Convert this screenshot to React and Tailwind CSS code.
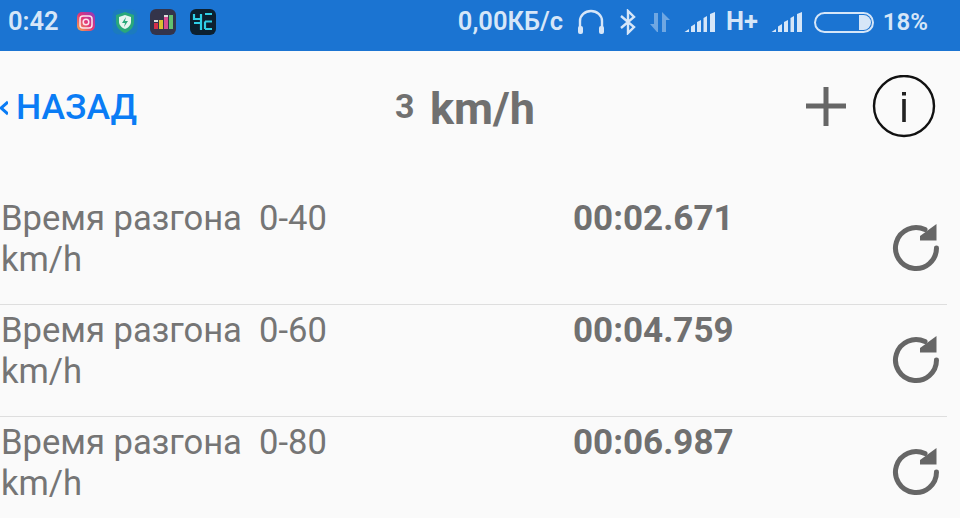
import React from 'react'

const font = { fontFamily: 'Roboto, sans-serif' }

const Signal = () => (
    <svg width="32" height="22" viewBox="0 0 32 22">
        <path d="M0.5 21 L5 18 V21 Z M7 21 V15.5 L11 13 V21 Z M13 21 V11 L17 9 V21 Z M19.5 21 V7 L23 5 V21 Z M26 21 V3 L31 1 V21 Z" fill="#d6e6f8" />
    </svg>
)

const Reload = () => (
    <svg width="48" height="48" viewBox="0 0 48 48" fill="none">
        <path d="M44.5 24 A20.5 20.5 0 1 1 33 5.6" stroke="#666" strokeWidth="5" strokeLinecap="round" />
        <path d="M44.5 0 V16.5 H28 V12 Z" fill="#666" />
    </svg>
)

const StatusBar = () => (
    <div className="h-[51px] bg-[#1b74d2] flex items-center justify-between pl-[8px] pr-[32px] pb-[7px] text-[#d6e6f8] font-semibold text-[25.5px] shrink-0">
        <div className="flex items-center">
            <span className="w-[68px] leading-none">0:42</span>
            <svg width="20" height="20" viewBox="0 0 20 20">
                <defs>
                    <linearGradient id="ig" x1="0" y1="1" x2="1" y2="0">
                        <stop offset="0" stopColor="#f5b04a" />
                        <stop offset="0.5" stopColor="#e0357a" />
                        <stop offset="1" stopColor="#8a3ac0" />
                    </linearGradient>
                </defs>
                <rect width="18" height="19" x="1" rx="5" fill="url(#ig)" />
                <rect x="4" y="4" width="12" height="12" rx="3" fill="none" stroke="#fbe6ee" strokeWidth="1.5" />
                <circle cx="10" cy="10" r="2.8" fill="none" stroke="#fbe6ee" strokeWidth="1.5" />
            </svg>
            <svg width="26" height="26" viewBox="0 0 26 26" className="ml-[16px]">
                <rect x="0.5" y="0.5" width="25" height="25" rx="6" fill="#1f8a9a" fillOpacity="0.35" />
                <path d="M13 3 L22 6 V13 C22 18 18 22 13 24 C8 22 4 18 4 13 V6 Z" fill="#2aa87a" />
                <path d="M13 6 L19 8 V13 C19 16 16 19 13 20 C10 19 7 16 7 13 V8 Z" fill="#e8f5f0" />
                <path d="M14 8 L10 14 H13 L12 18 L16 12 H13 Z" fill="#2aa87a" />
            </svg>
            <svg width="26" height="26" viewBox="0 0 26 26" className="ml-[12px]">
                <rect width="26" height="26" rx="6" fill="#34344a" />
                <rect x="4" y="14" width="4" height="6" fill="#d8304a" />
                <rect x="9" y="11" width="4" height="9" fill="#d8c030" />
                <rect x="14" y="8" width="4" height="12" fill="#d84a90" />
                <rect x="19" y="6" width="4" height="14" fill="#60c070" />
                <rect x="14" y="6" width="4" height="2" fill="#dddddd" />
                <rect x="4" y="11" width="4" height="2" fill="#dddddd" />
            </svg>
            <svg width="26" height="26" viewBox="0 0 26 26" className="ml-[14px]">
                <rect width="26" height="26" rx="6" fill="#0c2030" />
                <path d="M11 5 V14 H4 M4 5 V10 H11 M11 14 V21 M15 5 H22 M15 12.5 H22 M15 20 H22 M15 12.5 V20" stroke="#2ed0e8" strokeWidth="2.2" fill="none" />
            </svg>
        </div>
        <div className="flex items-center">
            <span className="leading-none">0,00КБ/с</span>
            <svg width="28" height="26" viewBox="0 0 28 26" className="ml-[14px]" fill="none">
                <path d="M3 21 V12 A11 10 0 0 1 25 12 V21" stroke="#d6e6f8" strokeWidth="2.4" />
                <rect x="1" y="17" width="5" height="8" rx="2" fill="#d6e6f8" />
                <rect x="22" y="17" width="5" height="8" rx="2" fill="#d6e6f8" />
            </svg>
            <svg width="18" height="26" viewBox="0 0 18 26" className="ml-[14px]" fill="none">
                <path d="M2 7 L15 18 L9 24 V2 L15 8 L2 19" stroke="#d6e6f8" strokeWidth="2.4" />
            </svg>
            <svg width="22" height="24" viewBox="0 0 22 24" className="ml-[12px]">
                <path d="M8 22 L1 14 H5 V3 H9 V22 Z M13 2 L21 10 H17 V22 H13 Z" fill="#6fa7e2" />
            </svg>
            <div className="ml-[13px]"><Signal /></div>
            <span className="ml-[10px] leading-none font-bold">H+</span>
            <div className="ml-[13px]"><Signal /></div>
            <div className="ml-[11px] w-[60px] h-[21px] rounded-full border-2 border-[#d6e6f8] flex justify-end p-[1px]">
                <div className="w-[12px] bg-[#d6e6f8] rounded-r-full" />
            </div>
            <span className="ml-[9px] leading-none text-[24px]">18%</span>
        </div>
    </div>
)

const Row = ({ range, time, border }) => (
    <div className={`h-[112px] shrink-0 mr-[13px] flex ${border ? 'border-b border-[#dedede]' : ''}`}>
        <div className="w-[573px] pl-[1px] pt-[5px] text-[34.6px] leading-[41px] text-[#757575] shrink-0">
            <div className="w-[360px]">Время разгона&nbsp; {range} km/h</div>
        </div>
        <div className="flex-1 pt-[5px] text-[35px] leading-[41px] font-bold text-[#707070]">{time}</div>
        <div className="pt-[31px] pr-[7px]"><Reload /></div>
    </div>
)

const App = () => {
    return (
        <div className="w-[960px] h-[518px] overflow-hidden bg-[#fafafa] flex flex-col" style={font}>
            <StatusBar />
            <div className="h-[142px] flex items-start pt-[24px] shrink-0">
                <svg width="8" height="16" viewBox="0 0 8 16" className="mt-[25px]" fill="none">
                    <path d="M8 2 L1 8 L8 14" stroke="#0a7cf5" strokeWidth="3" />
                </svg>
                <span className="ml-[8px] w-[379px] mt-[12px] text-[#0a7cf5] text-[35.5px] font-medium leading-[40px]">НАЗАД</span>
                <span className="mt-[14px] w-[35px] text-[#707070] font-bold text-[34px] leading-[34px]">3</span>
                <span className="mt-[11px] w-[375px] text-[#707070] font-bold text-[45px] leading-[46px]">km/h</span>
                <svg width="42" height="40" viewBox="0 0 42 40" className="mt-[12px] shrink-0">
                    <path d="M1 16.5 H41 V21.5 H1 Z M18.5 0 H23.5 V39 H18.5 Z" fill="#666" />
                </svg>
                <svg width="64" height="64" viewBox="0 0 64 64" className="ml-[25px] shrink-0" fill="none">
                    <circle cx="32" cy="31" r="30" stroke="#111" strokeWidth="2.4" />
                    <rect x="30" y="17" width="4" height="3.5" fill="#222" />
                    <rect x="30.2" y="24" width="3.6" height="23" fill="#222" />
                </svg>
            </div>
            <Row range="0-40" time="00:02.671" border />
            <Row range="0-60" time="00:04.759" border />
            <Row range="0-80" time="00:06.987" />
        </div>
    )
}

export default App
